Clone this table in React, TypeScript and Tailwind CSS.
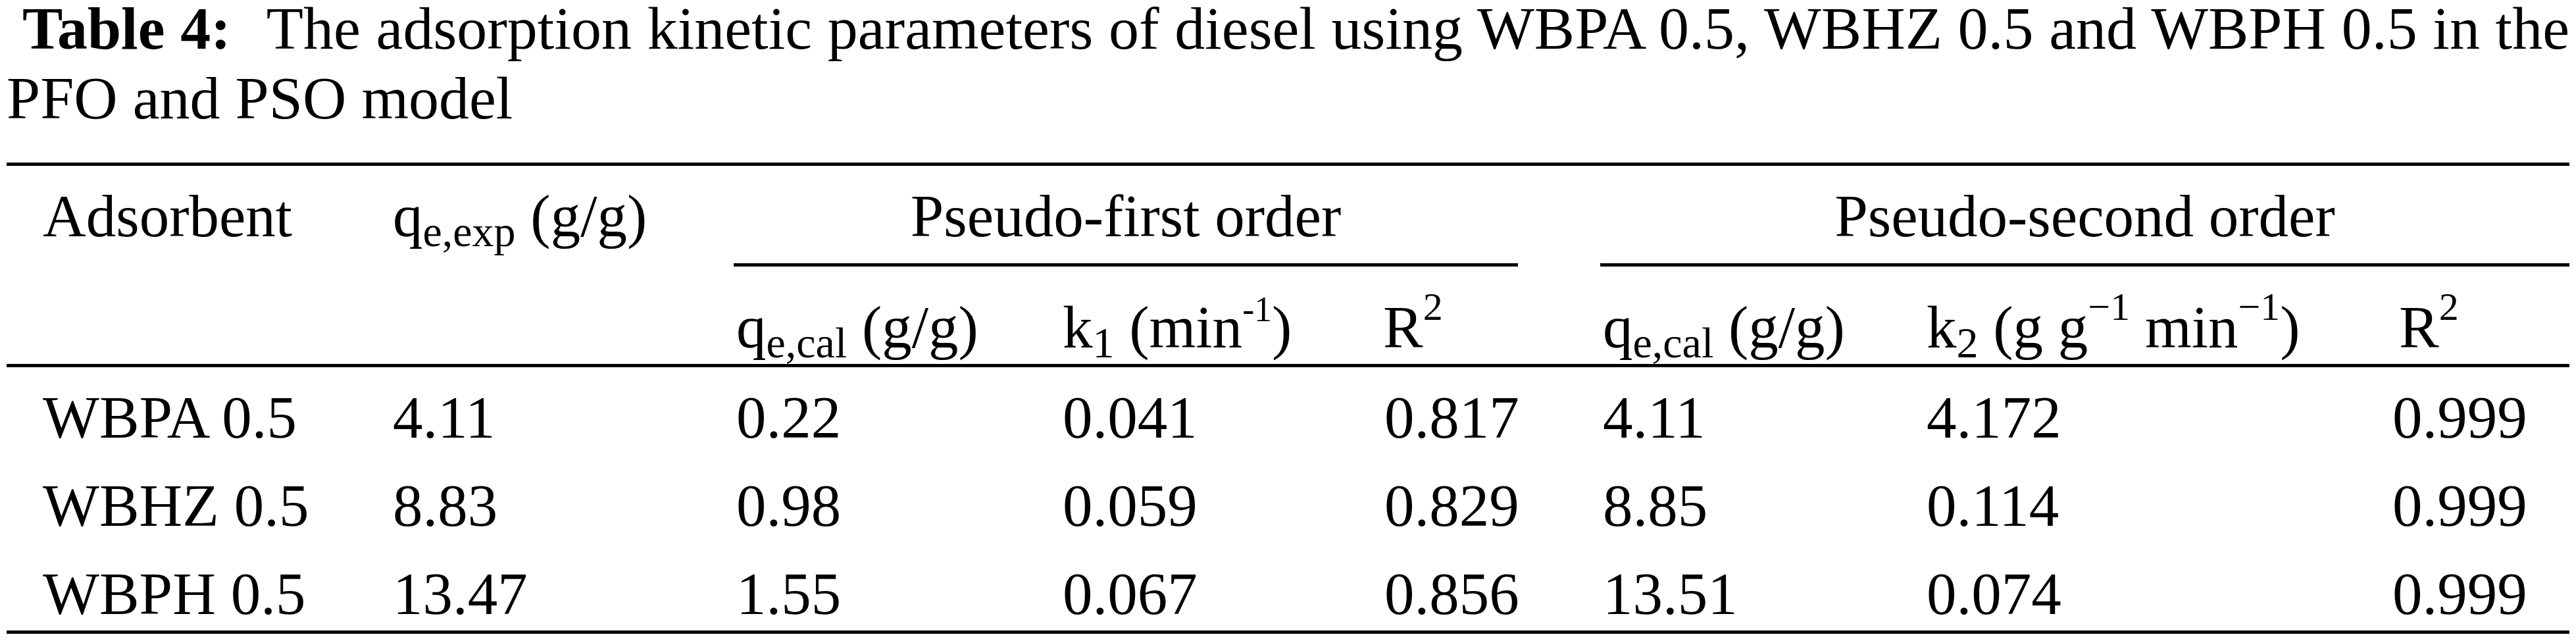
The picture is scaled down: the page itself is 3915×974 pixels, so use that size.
import React from "react";

const Sub = ({ children }: { children: React.ReactNode }) => (
  <span className="relative top-[15px] text-[66px] leading-none">{children}</span>
);
const Sup = ({ children }: { children: React.ReactNode }) => (
  <span className="relative -top-[42px] text-[60px] leading-none">{children}</span>
);

const rows = [
  ["WBPA 0.5", "4.11", "0.22", "0.041", "0.817", "4.11", "4.172", "0.999"],
  ["WBHZ 0.5", "8.83", "0.98", "0.059", "0.829", "8.85", "0.114", "0.999"],
  ["WBPH 0.5", "13.47", "1.55", "0.067", "0.856", "13.51", "0.074", "0.999"],
];

const cols = "grid grid-cols-[583px_522px_496px_489px_332px_492px_708px_273px]";

export default function App() {
  return (
    <div className="w-[3915px] h-[974px] overflow-hidden bg-white text-black font-['Liberation_Serif','Times_New_Roman',serif] text-[91px] leading-[106px]">
      <div className="px-[10px]">
        <div className="text-[92px]">
          <div className="pl-[24px] whitespace-nowrap leading-[86px] text-justify [text-align-last:justify]">
            <span className="font-bold pr-[32px]">Table 4:</span> The adsorption kinetic parameters of diesel using WBPA 0.5, WBHZ 0.5 and WBPH 0.5 in the
          </div>
          <div className="mt-[10px] whitespace-nowrap leading-[106px]">PFO and PSO model</div>
        </div>

        <div className="mt-[45px] border-t-[5px] border-black">
          <div className={cols}>
            <div className="row-span-2 pl-[55px] pt-[24px] whitespace-nowrap">Adsorbent</div>
            <div className="row-span-2 pl-[4px] pt-[24px] whitespace-nowrap">
              q<Sub>e,exp</Sub> (g/g)
            </div>
            <div className="col-span-3 mr-[125px] pt-[24px] pb-[18px] border-b-[5px] border-black text-center whitespace-nowrap">
              Pseudo-first order
            </div>
            <div className="col-span-3 pt-[24px] pb-[18px] border-b-[5px] border-black text-center whitespace-nowrap">
              Pseudo-second order
            </div>

            <div className="pl-[4px] pt-[40px] pb-[2px] whitespace-nowrap">
              q<Sub>e,cal</Sub> (g/g)
            </div>
            <div className="pl-[4px] pt-[40px] pb-[2px] whitespace-nowrap">
              k<Sub>1</Sub> (min<span className="relative -top-[40px] text-[54px] leading-none">-1</span>)
            </div>
            <div className="pl-[2px] pt-[40px] pb-[2px] whitespace-nowrap">
              R<Sup>2</Sup>
            </div>
            <div className="pl-[4px] pt-[40px] pb-[2px] whitespace-nowrap">
              q<Sub>e,cal</Sub> (g/g)
            </div>
            <div className="pl-[4px] pt-[40px] pb-[2px] whitespace-nowrap">
              k<Sub>2</Sub> (g g<Sup>−1</Sup> min<Sup>−1</Sup>)
            </div>
            <div className="pl-[14px] pt-[40px] pb-[2px] whitespace-nowrap">
              R<Sup>2</Sup>
            </div>
          </div>
        </div>

        <div className="border-t-[5px] border-black pt-[24px] pb-[2px] border-b-[5px]">
          <div className={`${cols} gap-y-[28px]`}>
            {rows.map((r, i) => (
              <React.Fragment key={i}>
                {r.map((c, j) => (
                  <div
                    key={j}
                    className={j === 0 ? "pl-[55px] whitespace-nowrap" : "pl-[4px] whitespace-nowrap"}
                  >
                    {c}
                  </div>
                ))}
              </React.Fragment>
            ))}
          </div>
        </div>
      </div>
    </div>
  );
}
